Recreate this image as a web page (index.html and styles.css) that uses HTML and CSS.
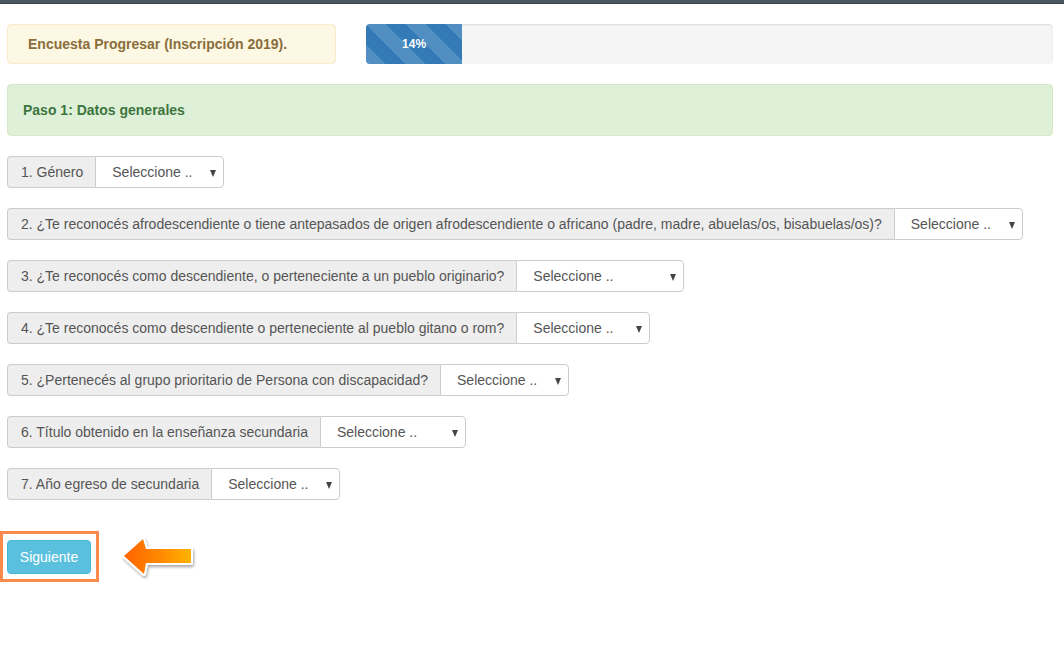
FILE: index.html
```html
<!DOCTYPE html>
<html lang="es">
<head>
<meta charset="utf-8">
<title>Encuesta Progresar</title>
<link rel="stylesheet" href="styles.css">
</head>
<body>
<div class="topbar"></div>
<div class="page">
  <div class="header-row">
    <div class="alert alert-warning">Encuesta Progresar (Inscripción 2019).</div>
    <div class="progress">
      <div class="progress-bar" style="width:14%">14%</div>
    </div>
  </div>

  <div class="alert alert-success">Paso 1: Datos generales</div>

  <div class="questions">
    <div class="input-group">
      <span class="addon">1. Género</span>
      <span class="select w129">Seleccione ..<span class="caret"></span></span>
    </div>
    <div class="input-group">
      <span class="addon">2. ¿Te reconocés afrodescendiente o tiene antepasados de origen afrodescendiente o africano (padre, madre, abuelas/os, bisabuelas/os)?</span>
      <span class="select w129">Seleccione ..<span class="caret"></span></span>
    </div>
    <div class="input-group">
      <span class="addon">3. ¿Te reconocés como descendiente, o perteneciente a un pueblo originario?</span>
      <span class="select w168">Seleccione ..<span class="caret"></span></span>
    </div>
    <div class="input-group">
      <span class="addon">4. ¿Te reconocés como descendiente o perteneciente al pueblo gitano o rom?</span>
      <span class="select w134">Seleccione ..<span class="caret"></span></span>
    </div>
    <div class="input-group">
      <span class="addon">5. ¿Pertenecés al grupo prioritario de Persona con discapacidad?</span>
      <span class="select w129">Seleccione ..<span class="caret"></span></span>
    </div>
    <div class="input-group">
      <span class="addon">6. Título obtenido en la enseñanza secundaria</span>
      <span class="select w146">Seleccione ..<span class="caret"></span></span>
    </div>
    <div class="input-group">
      <span class="addon">7. Año egreso de secundaria</span>
      <span class="select w129">Seleccione ..<span class="caret"></span></span>
    </div>
  </div>

  <div class="action-row">
    <div class="highlight">
      <button class="btn-info" type="button">Siguiente</button>
    </div>
    <svg class="pointer" width="76" height="44" viewBox="0 0 76 44" aria-hidden="true">
      <defs>
        <linearGradient id="ag" x1="0" y1="0" x2="1" y2="0">
          <stop offset="0" stop-color="#ff6400"/>
          <stop offset="0.55" stop-color="#ff8a00"/>
          <stop offset="1" stop-color="#ffb300"/>
        </linearGradient>
        <filter id="sh" x="-20%" y="-20%" width="140%" height="150%">
          <feGaussianBlur in="SourceAlpha" stdDeviation="1.5"/>
          <feOffset dx="1" dy="2" result="b"/>
          <feComponentTransfer><feFuncA type="linear" slope="0.35"/></feComponentTransfer>
          <feMerge><feMergeNode/><feMergeNode in="SourceGraphic"/></feMerge>
        </filter>
      </defs>
      <g filter="url(#sh)">
        <polygon points="3,19 22,2 25,12 70,12 70,26 25,26 23,37" fill="#fff" stroke="#fff" stroke-width="4" stroke-linejoin="round"/>
        <polygon points="3,19 22,2 25,12 70,12 70,26 25,26 23,37" fill="url(#ag)"/>
      </g>
    </svg>
  </div>
</div>
</body>
</html>
```

FILE: styles.css
```css
* { box-sizing: border-box; }

html, body {
  margin: 0;
  padding: 0;
  background: #fff;
}

body {
  font-family: "Liberation Sans", Arial, Helvetica, sans-serif;
  font-size: 14px;
  color: #555;
}

.topbar {
  height: 4px;
  background: #4c5763;
  border-bottom: 1px solid #3a434d;
}

.page {
  padding: 20px 11px 0 7px;
}

.header-row {
  display: flex;
  gap: 30px;
  align-items: stretch;
}

.alert {
  border: 1px solid transparent;
  border-radius: 4px;
  font-weight: bold;
  font-size: 14px;
}

.alert-warning {
  width: 329px;
  height: 40px;
  display: flex;
  align-items: center;
  padding-left: 20px;
  background: #fcf8e3;
  border-color: #faebcc;
  color: #8a6d3b;
}

.progress {
  flex: 1;
  height: 40px;
  background: #f5f5f5;
  border-radius: 4px;
  overflow: hidden;
  box-shadow: inset 0 1px 2px rgba(0,0,0,0.1);
  display: flex;
}

.progress-bar {
  height: 100%;
  background-color: #337ab7;
  background-image: linear-gradient(45deg, rgba(255,255,255,.15) 25%, transparent 25%, transparent 50%, rgba(255,255,255,.15) 50%, rgba(255,255,255,.15) 75%, transparent 75%, transparent);
  background-size: 40px 40px;
  color: #fff;
  font-size: 12px;
  font-weight: bold;
  display: flex;
  align-items: center;
  justify-content: center;
}

.alert-success {
  margin-top: 20px;
  height: 52px;
  display: flex;
  align-items: center;
  padding-left: 15px;
  background: #dff0d8;
  border-color: #d6e9c6;
  color: #3c763d;
}

.questions {
  margin-top: 20px;
  display: flex;
  flex-direction: column;
  align-items: flex-start;
  gap: 20px;
}

.input-group {
  display: flex;
  height: 32px;
}

.addon {
  display: flex;
  align-items: center;
  padding: 0 12px 0 13px;
  background: #eee;
  border: 1px solid #ccc;
  border-right: 0;
  border-radius: 4px 0 0 4px;
  color: #555;
  white-space: nowrap;
}

.select {
  position: relative;
  display: flex;
  align-items: center;
  padding-left: 16px;
  background: #fff;
  border: 1px solid #ccc;
  border-radius: 0 4px 4px 0;
  color: #555;
  white-space: nowrap;
}

.w129 { width: 129px; }
.w134 { width: 134px; }
.w146 { width: 146px; }
.w168 { width: 168px; }

.caret {
  position: absolute;
  right: 7px;
  top: 13px;
  width: 0;
  height: 0;
  border-left: 3.5px solid transparent;
  border-right: 3.5px solid transparent;
  border-top: 7px solid #444;
}

.action-row {
  margin-top: 31px;
  margin-left: -7px;
  display: flex;
  align-items: flex-start;
}

.highlight {
  border: 3px solid #f98a4c;
  padding: 6px 5px 5px 4px;
}

.btn-info {
  display: block;
  width: 84px;
  height: 34px;
  padding: 0;
  font-family: "Liberation Sans", Arial, Helvetica, sans-serif;
  font-size: 14px;
  color: #fff;
  background: #5bc0de;
  border: 1px solid #46b8da;
  border-radius: 4px;
}

.pointer {
  margin-left: 22px;
  margin-top: 6px;
}
```
